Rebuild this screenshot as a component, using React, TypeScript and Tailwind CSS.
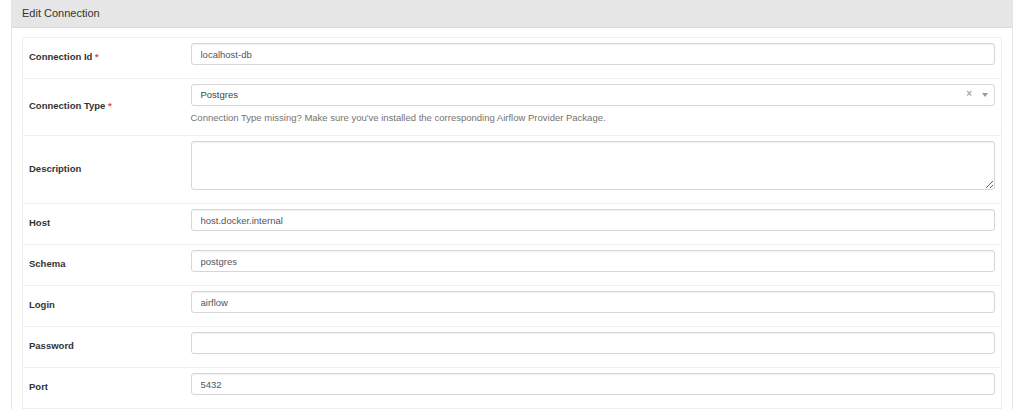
// App.tsx — Airflow "Edit Connection" form
const font = { fontFamily: '"Liberation Sans", Arial, Helvetica, sans-serif' };

const inputCls =
  'block w-full h-[22px] rounded-[3px] border border-[#d6d6d6] bg-white pl-[9px] text-[9.5px] text-[#555] outline-none shadow-[inset_0_1px_1px_rgba(0,0,0,0.05)]';

const Label = ({ label, required }: { label: string; required?: boolean }) => (
  <div className="pb-[2px] text-[9.5px] leading-[12px] font-bold text-[#333]">
    {label}
    {required && <span className="text-[#d9534f]"> *</span>}
  </div>
);

interface RowProps {
  label: string;
  required?: boolean;
  children: React.ReactNode;
}

const Row = ({ label, required, children }: RowProps) => (
  <tr className="border-t border-[#efefef]">
    <td className="w-[162px] pl-[6px] align-middle">
      <Label label={label} required={required} />
    </td>
    <td className="pl-[6px] pr-[6px] pt-[5px] pb-[13px] align-top">{children}</td>
  </tr>
);

const App = () => {
  return (
    <div className="min-h-[410px] bg-white pl-[11px] pr-[11px]" style={font}>
      <div className="border-x border-[#e4e4e4] bg-white">
        {/* 헤더 */}
        <div className="h-[28px] flex items-center pl-[10px] bg-[#e6e6e6] border-b border-[#dadada]">
          <span className="text-[11px] text-[#333]">Edit Connection</span>
        </div>
        {/* 본문 */}
        <div className="px-[10px] pt-[9px]">
          <table className="w-full border-collapse border border-[#efefef]">
            <tbody>
              <Row label="Connection Id" required>
                <input className={inputCls} defaultValue="localhost-db" />
              </Row>
              <tr className="border-t border-[#efefef]">
                <td className="w-[162px] pl-[6px] align-middle">
                  <Label label="Connection Type" required />
                </td>
                <td className="pl-[6px] pr-[6px] pt-[5px] pb-[11px] align-top">
                  <div className="relative flex items-center h-[22px] rounded-[3px] border border-[#d6d6d6] bg-white pl-[9px] text-[9.5px] text-[#444]">
                    Postgres
                    <span className="absolute right-[22px] top-[4px] text-[10px] leading-none font-bold text-[#aaa]">×</span>
                    <span className="absolute right-[6px] top-[8px] w-0 h-0 border-x-[3px] border-x-transparent border-t-[4px] border-t-[#999]" />
                  </div>
                  <p className="mt-[5px] text-[9.5px] leading-[13px] text-[#737373]">
                    Connection Type missing? Make sure you've installed the corresponding Airflow Provider Package.
                  </p>
                </td>
              </tr>
              <Row label="Description">
                <textarea className="block w-full h-[49px] rounded-[3px] border border-[#d6d6d6] bg-white px-[9px] text-[9.5px] text-[#555] outline-none shadow-[inset_0_1px_1px_rgba(0,0,0,0.05)]" />
              </Row>
              <Row label="Host">
                <input className={inputCls} defaultValue="host.docker.internal" />
              </Row>
              <Row label="Schema">
                <input className={inputCls} defaultValue="postgres" />
              </Row>
              <Row label="Login">
                <input className={inputCls} defaultValue="airflow" />
              </Row>
              <Row label="Password">
                <input type="password" className={inputCls} defaultValue="" />
              </Row>
              <Row label="Port">
                <input className={inputCls} defaultValue="5432" />
              </Row>
            </tbody>
          </table>
        </div>
      </div>
    </div>
  );
};

export default App;
